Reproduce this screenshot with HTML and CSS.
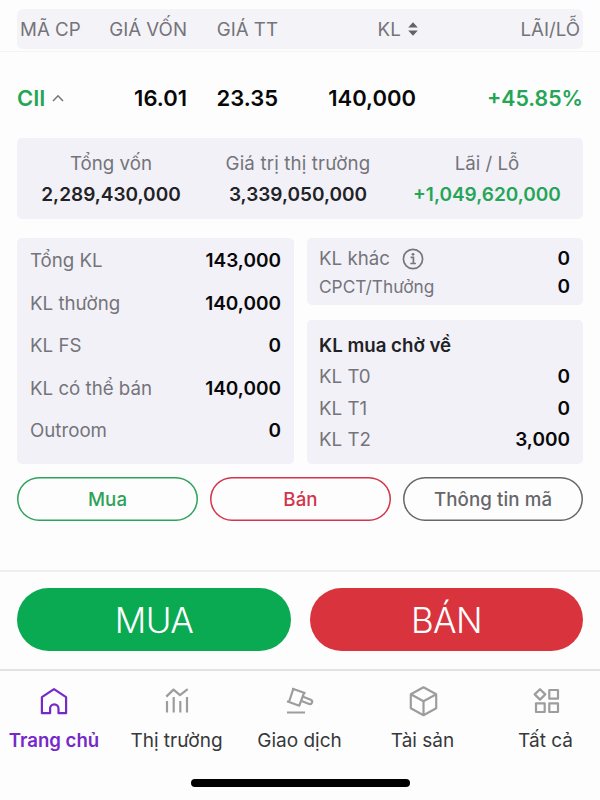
FILE: index.html
```
<!DOCTYPE html>
<html lang="vi">
<head>
<meta charset="utf-8">
<title>Danh mục</title>
<link rel="stylesheet" href="styles.css">
</head>
<body>
<main class="content">
  <div class="head-wrap">
    <div class="cols head">
      <span class="c1">MÃ CP</span><span class="c2">GIÁ VỐN</span><span class="c3">GIÁ TT</span>
      <span class="c4">KL <svg class="sort" width="10" height="14" viewBox="0 0 10 14"><path d="M5 .3 9.8 5.600H.2zM5 13.700.2 8.400h9.600z"/></svg></span>
      <span class="c5">LÃI/LỖ</span>
    </div>
  </div>
  <div class="cols stock">
    <span class="c1 up">CII <svg class="caret" width="12" height="8" viewBox="0 0 12 8"><path d="M1 7 6 1.8 11 7"/></svg></span>
    <span class="c2">16.01</span><span class="c3">23.35</span><span class="c4">140,000</span><span class="c5 up">+45.85%</span>
  </div>
  <section class="card summary">
    <div class="sum"><span class="label">Tổng vốn</span><b>2,289,430,000</b></div>
    <div class="sum"><span class="label wide">Giá trị thị trường</span><b>3,339,050,000</b></div>
    <div class="sum"><span class="label">Lãi / Lỗ</span><b class="up">+1,049,620,000</b></div>
  </section>
  <div class="details">
    <section class="card volume">
      <div class="row"><span class="label">Tổng KL</span><b>143,000</b></div>
      <div class="row"><span class="label">KL thường</span><b>140,000</b></div>
      <div class="row"><span class="label">KL FS</span><b>0</b></div>
      <div class="row"><span class="label">KL có thể bán</span><b>140,000</b></div>
      <div class="row"><span class="label">Outroom</span><b>0</b></div>
    </section>
    <div class="side">
      <section class="card other">
        <div class="row"><span class="label with-icon">KL khác <svg class="info" width="22" height="22" viewBox="0 0 22 22"><circle cx="11" cy="11" r="9.6"/><path d="M8.6 9.4h2.8v6M8.3 15.5h5.6"/><circle class="dot" cx="11" cy="6.3" r="1.4"/></svg></span><b>0</b></div>
        <div class="row"><span class="label small">CPCT/Thưởng</span><b>0</b></div>
      </section>
      <section class="card pending">
        <h2>KL mua chờ về</h2>
        <div class="row"><span class="label">KL T0</span><b>0</b></div>
        <div class="row"><span class="label">KL T1</span><b>0</b></div>
        <div class="row"><span class="label">KL T2</span><b>3,000</b></div>
      </section>
    </div>
  </div>
  <div class="actions">
    <button class="pill buy">Mua</button><button class="pill sell">Bán</button><button class="pill more">Thông tin mã</button>
  </div>
</main>
<div class="trade">
  <button class="big green">MUA</button><button class="big red">BÁN</button>
</div>
<nav class="tabs">
  <a class="tab active"><svg width="32" height="32" viewBox="0 0 32 32"><path d="M3.900 27.200V11.200L16 3.200l12.100 8v16h-7.600v-4.700a4 4 0 0 0-8.400 0v4.700z"/></svg><span>Trang chủ</span></a>
  <a class="tab"><svg width="32" height="32" viewBox="0 0 32 32"><path d="m5.300 10.600 7.200-7 6.500 5.500 7.700-5.900M6 15v11.500M12.700 11v15.500M19.300 15v11.500M26 11v15.500"/></svg><span>Thị trường</span></a>
  <a class="tab"><svg width="32" height="32" viewBox="0 0 32 32"><path d="m8 2.500 13.500 4.800M3 15.300l13 4.700M9.300 3 5 16M20 7l-4.700 12.700M18.500 10.500l8.300 3.200a2.300 2.300 0 0 1-1.600 4.300l-8.300-3.200M3 26.500h18"/></svg><span>Giao dịch</span></a>
  <a class="tab"><svg width="32" height="32" viewBox="0 0 32 32"><path d="m16.500 1.300 12.700 6.900v14L16.500 29.200 3.800 22.200v-14zM3.800 8.200l12.700 7 12.700-7M16.500 15.200v14"/></svg><span>Tài sản</span></a>
  <a class="tab"><svg width="32" height="32" viewBox="0 0 32 32"><path d="m10 3.200 5.300 5.200-5.300 5.200-5.300-5.200zM19.300 4h8.700v8.700h-8.700zM6 17.300h8.700V26H6zM19.300 17.300h8.700V26h-8.700z"/></svg><span>Tất cả</span></a>
</nav>
<div class="home-bar"></div>
</body>
</html>
```
FILE: styles.css
```
* { box-sizing: border-box; }
body { margin: 0; width: 600px; height: 800px; overflow: hidden; display: flex; flex-direction: column; background: #fdfdfd; color: #08080a; font-family: Inter, "Liberation Sans", sans-serif; font-size: 18.700px; line-height: 24px; }
.content { height: 570px; display: flex; flex-direction: column; }
.up { color: #25a556; }
b, h2 { font-weight: 600; font-size: 19px; letter-spacing: 0; }
.label { color: #74747a; letter-spacing: 0; }
.label.wide { letter-spacing: .15px; }
.head-wrap { padding: 9px 17px 2px; border-bottom: 1px solid #f4f4f5; }
.cols { display: grid; grid-template-columns: 90px 80px 91px 138px 1fr; align-items: center; text-align: right; white-space: nowrap; }
.head { height: 40px; padding: 2px 3px 0 3px; grid-template-columns: 87px 80px 91px 140px 1fr; background: #f4f3f8; border-radius: 6px; color: #74747a; }
.cols .c1 { text-align: left; }
.sort { margin-left: 2px; fill: #626267; }
.stock { height: 86px; padding: 6px 17px 0; font-size: 22px; font-weight: 600; }
.stock .c5 { font-size: 21.300px; }
.caret { fill: none; stroke: #77777b; stroke-width: 1.600; vertical-align: 4px; margin-left: 1px; }
.card { background: #f2f1f7; border-radius: 5px; }
.summary { margin: 0 17px; height: 81px; display: grid; grid-template-columns: 188px 186px 192px; padding-top: 14px; text-align: center; }
.sum { display: flex; flex-direction: column; gap: 7px; }
.details { margin: 19px 17px 0; display: grid; grid-template-columns: 277px 276px; gap: 13px; height: 226px; }
.volume { padding: 11px 13px 0; display: flex; flex-direction: column; gap: 18.600px; }
.row { display: flex; justify-content: space-between; align-items: center; height: 24px; }
.side { display: flex; flex-direction: column; gap: 15px; }
.other { height: 67px; padding: 9px 13px 0 12px; display: flex; flex-direction: column; gap: 3.500px; }
.with-icon { display: flex; align-items: center; gap: 12px; }
.info { fill: none; stroke: #77777b; stroke-width: 1.700; }
.info .dot { fill: #77777b; stroke: none; }
.small { font-size: 17.300px; }
.pending { flex: 1; padding: 14px 13px 0 12px; display: flex; flex-direction: column; gap: 7.400px; }
h2 { margin: 0; color: #222226; font-size: 18.700px; }
.summary b { color: #222226; }
.summary b.up { color: #25a556; }
.actions { margin: 13px 17px 0; display: grid; grid-template-columns: 181px 181px 180px; gap: 12px; }
button { font-family: inherit; padding: 0; }
.pill { height: 44px; border: 0; box-shadow: inset 0 0 0 1.500px currentColor; border-radius: 22px; background: none; font-size: 18.700px; font-weight: 500; letter-spacing: .1px; }
.buy { color: #2da35a; }
.sell { color: #d2344a; }
.more { color: #66666a; }
.trade { height: 99px; border-top: 2px solid #efefef; padding: 16px 17px 0; display: grid; grid-template-columns: 274px 273px; gap: 19px; }
.big { height: 63px; border: 0; border-radius: 32px; color: #fff; font-size: 35px; font-weight: 350; letter-spacing: -.6px; }
.green { background: #0aaa52; }
.red { background: #d9343d; }
.tabs { border-top: 2px solid #e2e2e2; height: 110px; padding: 15px 0 0; display: grid; grid-template-columns: 108px 137px 109px 137px 109px; }
.tab { display: flex; flex-direction: column; align-items: center; gap: 11px; color: #38383b; white-space: nowrap; font-size: 19px; }
.tab svg { fill: none; stroke: #9d9d9f; stroke-width: 2.200; stroke-linejoin: round; }
.tab.active { color: #7628c8; font-weight: 600; font-size: 18.600px; gap: 10px; }
.tab.active svg { stroke: #7628c8; }
.home-bar { width: 219px; height: 8px; margin-left: 191px; border-radius: 4px; background: #000; }
```
